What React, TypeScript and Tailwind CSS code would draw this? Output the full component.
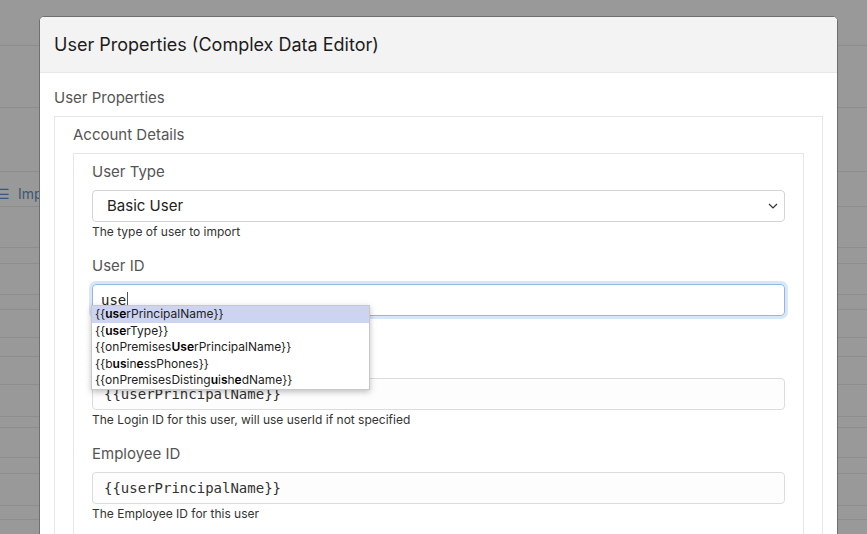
import React from 'react';

const sans = "font-['Inter','Liberation_Sans',sans-serif]";
const mono = "font-['DejaVu_Sans_Mono','Liberation_Mono',monospace]";

const bgLines = [45, 107, 171, 206, 247, 263, 294, 309, 337, 356, 384, 416, 427, 457, 473, 505, 519];

type Part = { t: string; b?: boolean };

const suggestions: Part[][] = [
  [{ t: '{{' }, { t: 'use', b: true }, { t: 'rPrincipalName}}' }],
  [{ t: '{{' }, { t: 'use', b: true }, { t: 'rType}}' }],
  [{ t: '{{onPremises' }, { t: 'Use', b: true }, { t: 'rPrincipalName}}' }],
  [{ t: '{{b' }, { t: 'us', b: true }, { t: 'in' }, { t: 'e', b: true }, { t: 'ssPhones}}' }],
  [{ t: '{{onPremisesDisting' }, { t: 'u', b: true }, { t: 'i' }, { t: 's', b: true }, { t: 'h' }, { t: 'e', b: true }, { t: 'dName}}' }],
];

function Field({ label, help, children }: { label: string; help: string; children: React.ReactNode }) {
  return (
    <div className="flex flex-col">
      <label className="h-5 text-[15px] leading-5 text-[#555]">{label}</label>
      <div className="mt-2">{children}</div>
      <p className="mt-[2px] h-4 text-[12px] leading-4 text-[#333]">{help}</p>
    </div>
  );
}

function TextBox({ value }: { value: string }) {
  return (
    <div className={`flex h-8 items-center rounded-[4px] border border-[#dcdcdc] bg-[#fdfdfd] px-[11px] text-[14px] text-[#333] ${mono}`}>
      {value}
    </div>
  );
}

export default function App() {
  return (
    <div className={`relative h-[534px] w-[867px] overflow-hidden bg-[#999999] ${sans}`}>
      {/* page behind the overlay */}
      {bgLines.map((y) => (
        <div key={y} className="absolute left-0 right-0 h-px bg-[#8d8d8d]" style={{ top: y }} />
      ))}
      <div className="absolute left-0 top-[183px] flex items-center gap-2 text-[14px] text-[#3b5676]">
        <span className="-ml-[3px]">☰</span>
        <span>Import</span>
      </div>

      {/* modal */}
      <div className="absolute left-[39px] top-[16px] w-[799px] h-[600px] rounded-[5px] border border-[#6f6f6f] bg-white overflow-hidden">
        <div className="flex h-[56px] items-center border-b border-[#e8e8e8] bg-[#f3f3f3] px-[14px]">
          <h2 className="text-[18px] text-[#1c1c1c]">User Properties (Complex Data Editor)</h2>
        </div>
        <div className="px-[14px] pt-[15px]">
          <div className="h-5 text-[15px] leading-5 text-[#555]">User Properties</div>
          <div className="mt-[8px] border border-[#e6e6e6] px-[18px] pt-[8px] pb-[40px]">
            <div className="h-5 text-[15px] leading-5 text-[#555]">Account Details</div>
            <div className="mt-[8px] flex flex-col gap-4 border border-[#e6e6e6] px-[18px] pt-[8px] pb-[40px]">
              <Field label="User Type" help="The type of user to import">
                <div className="flex h-8 items-center justify-between rounded-[4px] border border-[#d4d4d4] bg-white pl-[14px] pr-[6px] text-[15px] text-[#222]">
                  <span>Basic User</span>
                  <svg width="10" height="6" viewBox="0 0 10 6" fill="none" stroke="#333" strokeWidth="1.2">
                    <path d="M1 1l4 4 4-4" />
                  </svg>
                </div>
              </Field>

              <Field label="User ID" help="">
                <div className="relative">
                  <div className={`flex h-8 items-center rounded-[4px] border border-[#8fb8e8] px-[8px] text-[14px] text-[#222] shadow-[0_0_0_3px_rgba(170,200,240,0.45)] ${mono}`}>
                    use<span className="ml-px inline-block h-[17px] w-px bg-[#555]" />
                  </div>
                  <div className="absolute left-[-1px] top-[21px] z-10 w-[279px] border border-[#c8c8c8] bg-white shadow-[0_2px_6px_rgba(0,0,0,0.25)]">
                    {suggestions.map((parts, i) => (
                      <div
                        key={i}
                        className={`h-[16.6px] pl-[3px] text-[12px] leading-[16.6px] text-[#222] ${i === 0 ? 'bg-[#cdd4f1]' : ''}`}
                      >
                        {parts.map((p, j) => (
                          <span key={j} className={p.b ? 'font-semibold text-black' : ''}>{p.t}</span>
                        ))}
                      </div>
                    ))}
                  </div>
                </div>
              </Field>

              <Field label="Login ID" help="The Login ID for this user, will use userId if not specified">
                <TextBox value="{{userPrincipalName}}" />
              </Field>

              <Field label="Employee ID" help="The Employee ID for this user">
                <TextBox value="{{userPrincipalName}}" />
              </Field>
            </div>
          </div>
        </div>
      </div>
    </div>
  );
}
